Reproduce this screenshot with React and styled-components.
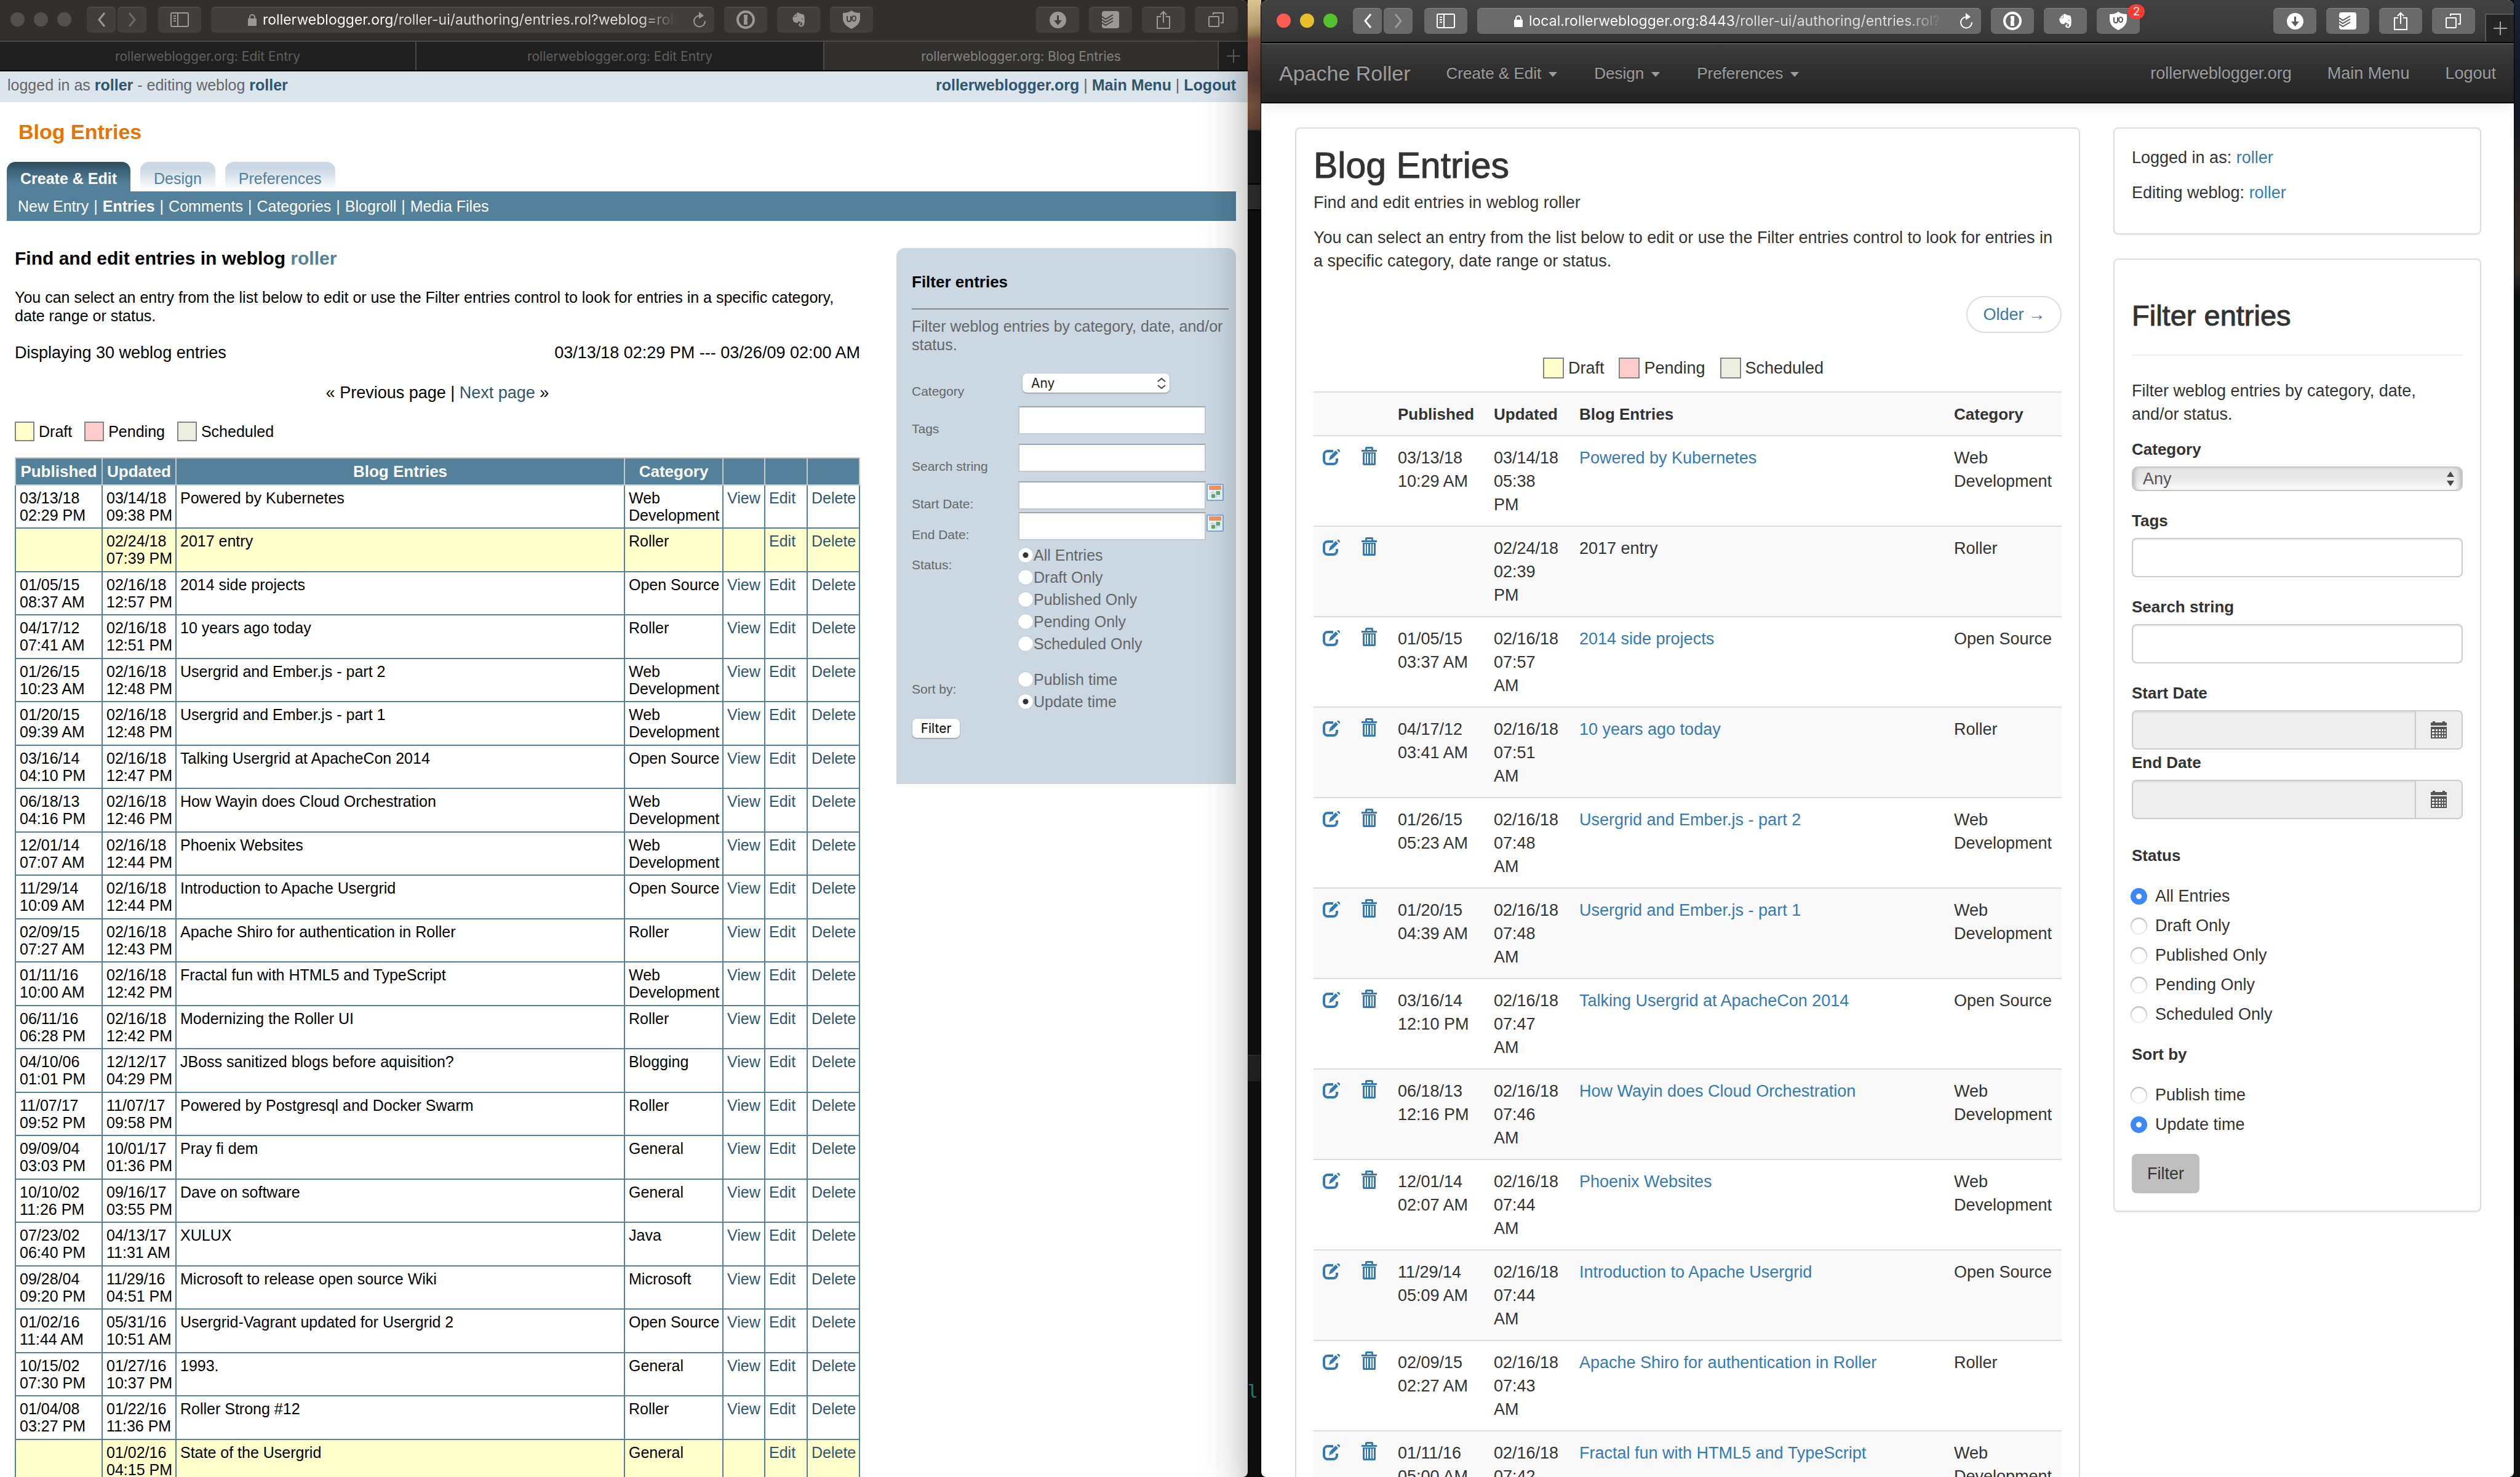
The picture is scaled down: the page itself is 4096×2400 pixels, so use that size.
import React from "react";
import styled, { createGlobalStyle, css } from "styled-components";
import { FaEvernote } from "react-icons/fa";

const GlobalStyle = createGlobalStyle`
  *, *::before, *::after { box-sizing: border-box; }
  html, body, #root { height: 100%; }
  body { margin: 0; background: #111; overflow: hidden; }
  body, button, input, select { font-family: "Liberation Sans", Arial, sans-serif; }
  button, input, select { margin: 0; padding: 0; border: 0; background: none; color: inherit; }
  h1, h2, p, ul, fieldset, table { margin: 0; padding: 0; border: 0; }
  ul { list-style: none; }
  a { text-decoration: none; }
`;

/* ---------- data ---------- */

const legacyEntries = [
  ["03/13/18 02:29 PM", "03/14/18 09:38 PM", "Powered by Kubernetes", "Web Development"],
  ["", "02/24/18 07:39 PM", "2017 entry", "Roller"],
  ["01/05/15 08:37 AM", "02/16/18 12:57 PM", "2014 side projects", "Open Source"],
  ["04/17/12 07:41 AM", "02/16/18 12:51 PM", "10 years ago today", "Roller"],
  ["01/26/15 10:23 AM", "02/16/18 12:48 PM", "Usergrid and Ember.js - part 2", "Web Development"],
  ["01/20/15 09:39 AM", "02/16/18 12:48 PM", "Usergrid and Ember.js - part 1", "Web Development"],
  ["03/16/14 04:10 PM", "02/16/18 12:47 PM", "Talking Usergrid at ApacheCon 2014", "Open Source"],
  ["06/18/13 04:16 PM", "02/16/18 12:46 PM", "How Wayin does Cloud Orchestration", "Web Development"],
  ["12/01/14 07:07 AM", "02/16/18 12:44 PM", "Phoenix Websites", "Web Development"],
  ["11/29/14 10:09 AM", "02/16/18 12:44 PM", "Introduction to Apache Usergrid", "Open Source"],
  ["02/09/15 07:27 AM", "02/16/18 12:43 PM", "Apache Shiro for authentication in Roller", "Roller"],
  ["01/11/16 10:00 AM", "02/16/18 12:42 PM", "Fractal fun with HTML5 and TypeScript", "Web Development"],
  ["06/11/16 06:28 PM", "02/16/18 12:42 PM", "Modernizing the Roller UI", "Roller"],
  ["04/10/06 01:01 PM", "12/12/17 04:29 PM", "JBoss sanitized blogs before aquisition?", "Blogging"],
  ["11/07/17 09:52 PM", "11/07/17 09:58 PM", "Powered by Postgresql and Docker Swarm", "Roller"],
  ["09/09/04 03:03 PM", "10/01/17 01:36 PM", "Pray fi dem", "General"],
  ["10/10/02 11:26 PM", "09/16/17 03:55 PM", "Dave on software", "General"],
  ["07/23/02 06:40 PM", "04/13/17 11:31 AM", "XULUX", "Java"],
  ["09/28/04 09:20 PM", "11/29/16 04:51 PM", "Microsoft to release open source Wiki", "Microsoft"],
  ["01/02/16 11:44 AM", "05/31/16 10:51 AM", "Usergrid-Vagrant updated for Usergrid 2", "Open Source"],
  ["10/15/02 07:30 PM", "01/27/16 10:37 PM", "1993.", "General"],
  ["01/04/08 03:27 PM", "01/22/16 11:36 PM", "Roller Strong #12", "Roller"],
  ["", "01/02/16 04:15 PM", "State of the Usergrid", "General"],
];

const entries = [
  ["03/13/18 10:29 AM", "03/14/18 05:38 PM", "Powered by Kubernetes", "Web Development"],
  ["", "02/24/18 02:39 PM", "2017 entry", "Roller"],
  ["01/05/15 03:37 AM", "02/16/18 07:57 AM", "2014 side projects", "Open Source"],
  ["04/17/12 03:41 AM", "02/16/18 07:51 AM", "10 years ago today", "Roller"],
  ["01/26/15 05:23 AM", "02/16/18 07:48 AM", "Usergrid and Ember.js - part 2", "Web Development"],
  ["01/20/15 04:39 AM", "02/16/18 07:48 AM", "Usergrid and Ember.js - part 1", "Web Development"],
  ["03/16/14 12:10 PM", "02/16/18 07:47 AM", "Talking Usergrid at ApacheCon 2014", "Open Source"],
  ["06/18/13 12:16 PM", "02/16/18 07:46 AM", "How Wayin does Cloud Orchestration", "Web Development"],
  ["12/01/14 02:07 AM", "02/16/18 07:44 AM", "Phoenix Websites", "Web Development"],
  ["11/29/14 05:09 AM", "02/16/18 07:44 AM", "Introduction to Apache Usergrid", "Open Source"],
  ["02/09/15 02:27 AM", "02/16/18 07:43 AM", "Apache Shiro for authentication in Roller", "Roller"],
  ["01/11/16 05:00 AM", "02/16/18 07:42 AM", "Fractal fun with HTML5 and TypeScript", "Web Development"],
];

const statuses = ["All Entries", "Draft Only", "Published Only", "Pending Only", "Scheduled Only"];
const sorts = ["Publish time", "Update time"];
const legend = [
  ["Draft", "#ffffcc"],
  ["Pending", "#ffcccc"],
  ["Scheduled", "#eceedf"],
];

/* ---------- icons ---------- */

const ChevronIcon = ({ flip }) => (
  <svg width="14" height="26" viewBox="0 0 14 26" fill="none" stroke="currentColor" strokeWidth="3">
    <path d={flip ? "M2 2l9 11-9 11" : "M12 2L3 13l9 11"} />
  </svg>
);

const SidebarIcon = () => (
  <svg width="30" height="24" viewBox="0 0 30 24" fill="none" stroke="currentColor" strokeWidth="2">
    <rect x="1" y="1" width="28" height="22" rx="2" />
    <path d="M12 1v22M5 6h4M5 10h4M5 14h4" />
  </svg>
);

const LockIcon = () => (
  <svg width="16" height="20" viewBox="0 0 16 20">
    <path d="M4 9V6a4 4 0 0 1 8 0v3" fill="none" stroke="currentColor" strokeWidth="2" />
    <rect x="1" y="8" width="14" height="12" rx="1" fill="currentColor" />
  </svg>
);

const ReloadIcon = () => (
  <svg width="24" height="28" viewBox="0 0 24 28" fill="none">
    <path d="M11 7.500A9 9 0 1 0 21 16" stroke="currentColor" strokeWidth="2" />
    <path d="M11 1l8 6.500-8 5z" fill="currentColor" />
  </svg>
);

const KeyholeIcon = () => (
  <svg width="32" height="32" viewBox="0 0 32 32">
    <circle cx="16" cy="16" r="13" fill="none" stroke="currentColor" strokeWidth="4" />
    <path d="M13 8h6v8l-1 2 1 1v5h-6v-8l1-2-1-1z" fill="currentColor" />
  </svg>
);

const ShieldIcon = ({ ink }) => (
  <svg width="28" height="30" viewBox="0 0 28 30">
    <path d="M14 0c4 3 8 4 14 4v8c0 9-6 14-14 18C6 26 0 21 0 12V4c6 0 10-1 14-4z" fill="currentColor" />
    <path d="M7 9v6q0 3 3 3t3-3V9" fill="none" stroke={ink} strokeWidth="2" />
    <ellipse cx="18" cy="13" rx="3" ry="4" fill="none" stroke={ink} strokeWidth="2" />
  </svg>
);

const DownloadIcon = ({ ink }) => (
  <svg width="27" height="27" viewBox="0 0 27 27">
    <circle cx="13.500" cy="13.500" r="13.500" fill="currentColor" />
    <path d="M12 6h3v8h5l-6.500 8L7 14h5z" fill={ink} />
  </svg>
);

const TasksIcon = ({ ink }) => (
  <svg width="28" height="28" viewBox="0 0 28 28">
    <rect width="28" height="28" rx="4" fill="currentColor" />
    <path d="M0 9l6 4L18 6M0 14l6 4 12-7M0 19l6 4 12-7" fill="none" stroke={ink} strokeWidth="2" />
  </svg>
);

const ShareIcon = () => (
  <svg width="24" height="30" viewBox="0 0 24 30" fill="none" stroke="currentColor" strokeWidth="2">
    <path d="M8 10H2v19h20V10h-6M12 20V2M7 7l5-5 5 5" />
  </svg>
);

const WindowsIcon = () => (
  <svg width="26" height="24" viewBox="0 0 26 24" fill="none" stroke="currentColor" strokeWidth="2">
    <rect x="1" y="7" width="16" height="16" rx="1" />
    <path d="M8 4V1h16v16h-4" />
  </svg>
);

const PlusIcon = () => (
  <svg width="22" height="22" viewBox="0 0 22 22" stroke="currentColor" strokeWidth="2">
    <path d="M11 0v22M0 11h22" />
  </svg>
);

const EditIcon = () => (
  <svg width="29" height="26" viewBox="0 0 29 26">
    <path d="M17 3H8a6 6 0 0 0-6 6v9a6 6 0 0 0 6 6h9a6 6 0 0 0 6-6v-3" fill="none" stroke="currentColor" strokeWidth="4" />
    <path d="M10 18l2-7L21 2l4 4-9 9zM23 1l1-1h2l2 2v2l-1 1z" fill="currentColor" />
  </svg>
);

const TrashIcon = () => (
  <svg width="25" height="30" viewBox="0 0 25 30">
    <path d="M6 5V2q0-2 2-2h9q2 0 2 2v3h6v3H0V5zm3 0h7V3H9z" fill="currentColor" fillRule="evenodd" />
    <path d="M2 9h21v19q0 2-2 2H4q-2 0-2-2zm3 2v16h2V11zm4 0v16h2V11zm5 0v16h2V11zm4 0v16h2V11z" fill="currentColor" fillRule="evenodd" />
  </svg>
);

const GridCalendarIcon = () => (
  <svg width="26" height="28" viewBox="0 0 26 28">
    <path d="M0 2h3V0h4v2h12V0h4v2h3v5H0z" fill="currentColor" />
    <path d="M0 9h26v19H0zM2 13v3h4v-3zm6 0v3h3v-3zm5 0v3h3v-3zm5 0v3h2v-3zm4 0v3h2v-3zM2 18v3h4v-3zm6 0v3h3v-3zm5 0v3h3v-3zm5 0v3h2v-3zm4 0v3h2v-3zM2 23v3h4v-3zm6 0v3h3v-3zm5 0v3h3v-3zm5 0v3h2v-3zm4 0v3h2v-3z" fill="currentColor" fillRule="evenodd" />
  </svg>
);

const ColorCalendarIcon = () => (
  <svg width="28" height="28" viewBox="0 0 28 28">
    <rect x="1" y="1" width="26" height="26" rx="1" fill="#eef5fc" stroke="#7fa8dc" strokeWidth="2" />
    <rect x="4" y="3" width="20" height="7" rx="1" fill="#f5935a" />
    <path d="M5 15h18M5 20h18M10 11v13M16 11v13" stroke="#b5cdea" />
    <rect x="16" y="12" width="6" height="6" fill="#5fae5f" />
    <rect x="8" y="17" width="6" height="6" fill="#5fae5f" />
  </svg>
);

const UpDownChevrons = () => (
  <svg width="14" height="20" viewBox="0 0 14 20" fill="none" stroke="#444" strokeWidth="2">
    <path d="M1 7l6-5 6 5M1 13l6 5 6-5" />
  </svg>
);

const UpDownTriangles = () => (
  <svg width="12" height="24" viewBox="0 0 12 24" fill="#4a4a4a">
    <path d="M0 9l6-9 6 9zM0 15l6 9 6-9z" />
  </svg>
);

/* ---------- desktop ---------- */

const Desktop = styled.div`
  display: grid;
  grid-template-columns: 2028fr 22px 2036fr 10px;
  height: 100%;
  overflow: hidden;
`;

const Backdrop = styled.div`
  display: flex;
  flex-direction: column;
  background: #111;
  color: #23a3a0;
  font: 28px "DejaVu Sans Mono", monospace;
`;

const Photo = styled.div`
  height: 210px;
  background: linear-gradient(#e8cd99, #cfb17c 40px, #a88a5e 56px, #94604c 64px, #6f4a40 130px, #95654b 170px, #7a503b);
`;

const Band = styled.div`
  height: ${(p) => p.$h}px;
  background: ${(p) => p.$bg};
  border-top: 2px solid ${(p) => p.$edge || "#000"};
`;

const Spacer = styled.div`
  flex: ${(p) => p.$grow || 1};
`;

const Edge = styled.div`
  background: linear-gradient(#1a2434, #1c2330 200px, #35302c 280px, #453c37 440px, #121a1d 480px, #10191b 1200px, #1c1c1a 1600px, #050607 1750px, #14181a);
`;

const Window = styled.section`
  display: flex;
  flex-direction: column;
  min-width: 0;
  min-height: 0;
  overflow: hidden;
  background: #fff;
  border-radius: ${(p) => (p.$front ? "10px 10px 8px 8px" : "0 10px 8px 0")};
  ${(p) =>
    p.$front &&
    css`
      z-index: 1;
      box-shadow: 0 40px 90px rgba(0, 0, 0, 0.6), 0 0 0 1px #000;
    `}
`;

/* ---------- browser chrome ---------- */

const Toolbar = styled.header`
  flex: none;
  display: flex;
  align-items: flex-start;
  gap: 16px;
  height: ${(p) => (p.$front ? 70 : 68)}px;
  padding: ${(p) => (p.$front ? "13px 0 0 25px" : "11px 16px 0 17px")};
  color: ${(p) => (p.$front ? "#fff" : "#9a9997")};
  background: ${(p) => (p.$front ? "linear-gradient(#434343, #363636)" : "#31302d")};
  border-bottom: ${(p) => (p.$front ? "2px solid #000" : "2px solid #4a4947")};
`;

const Lights = styled.div`
  display: flex;
  gap: 15px;
  padding: 9px 9px 0 0;
`;

const Light = styled.button`
  width: 23px;
  height: 23px;
  border-radius: 50%;
  background: ${(p) => p.$c};
`;

const ToolPair = styled.div`
  display: flex;
  gap: 3px;
  margin-right: 3px;
`;

const Tool = styled.button`
  position: relative;
  display: grid;
  place-items: center;
  width: ${(p) => (p.$narrow ? 47 : 70)}px;
  height: 42px;
  border-radius: 7px;
  color: ${(p) => (p.$dim ? (p.$front ? "#9a9a9a" : "#6c6b69") : "inherit")};
  background: ${(p) => (p.$front ? "#6a6a6a" : "#403f3c")};
  box-shadow: inset 0 1px 0 ${(p) => (p.$front ? "#858585" : "#52514e")};
`;

const Badge = styled.span`
  position: absolute;
  top: -6px;
  right: -8px;
  width: 27px;
  height: 24px;
  border-radius: 12px;
  background: #ff3b30;
  color: #fff;
  font: 19px/24px Inter, sans-serif;
  text-align: center;
`;

const AddressBar = styled.div`
  flex: 1;
  min-width: 0;
  display: flex;
  align-items: center;
  gap: 9px;
  height: 42px;
  padding: 0 12px 0 59px;
  border-radius: 7px;
  background: ${(p) => (p.$front ? "#6b6b6b" : "#403f3c")};
  box-shadow: inset 0 1px 0 ${(p) => (p.$front ? "#858585" : "#52514e")};
`;

const Address = styled.input`
  flex: 1;
  min-width: 0;
  height: 42px;
  margin-right: 16px;
  font: 23px Inter, sans-serif;
  outline: 0;
  -webkit-text-fill-color: transparent;
  background: linear-gradient(90deg, #fff ${(p) => p.$host}px, #dedede ${(p) => p.$host}px, #dedede calc(100% - 60px), transparent);
  background-clip: text;
  -webkit-background-clip: text;
`;

const ReloadButton = styled.button`
  display: grid;
  place-items: center;
  height: 42px;
`;

const NewTab = styled.button`
  display: grid;
  place-items: center;
  width: 47px;
  height: 46px;
  margin-top: 9px;
  color: #a5a5a5;
  background: #262626;
  border-left: 2px solid #5a5a5a;
  border-top: 2px solid #5a5a5a;
`;

const TabStrip = styled.nav`
  flex: none;
  display: grid;
  grid-template-columns: 677fr 663fr 641fr 47px;
  height: 48px;
  border-bottom: 2px solid #000;
  background: #202020;
`;

const PageTab = styled.button`
  display: grid;
  place-items: center;
  font: 21px Inter, sans-serif;
  color: ${(p) => (p.$on ? "#84837f" : "#5f5f5f")};
  background: ${(p) => (p.$on ? "#31302d" : "#202020")};
  border-right: ${(p) => (p.$last ? 0 : "2px solid #4a4947")};
`;

function ChromeBar({ front, url, host, badge }) {
  const ink = front ? "#5a5a5a" : "#403f3c";
  const lights = front ? ["#ff5b52", "#e6bf2c", "#54c22c"] : ["#52514f", "#52514f", "#52514f"];
  return (
    <Toolbar $front={front}>
      <Lights>
        {["Close", "Minimize", "Zoom"].map((n, i) => (
          <Light key={n} aria-label={n} $c={lights[i]} />
        ))}
      </Lights>
      <ToolPair>
        <Tool $narrow $front={front} aria-label="Back"><ChevronIcon /></Tool>
        <Tool $narrow $dim $front={front} aria-label="Forward"><ChevronIcon flip /></Tool>
      </ToolPair>
      <Tool $front={front} aria-label="Sidebar"><SidebarIcon /></Tool>
      <AddressBar $front={front}>
        <LockIcon />
        <Address aria-label="Address" defaultValue={url} $host={host} />
        <ReloadButton aria-label="Reload"><ReloadIcon /></ReloadButton>
      </AddressBar>
      <Tool $front={front} aria-label="Passwords"><KeyholeIcon /></Tool>
      <Tool $front={front} aria-label="Clipper"><FaEvernote size={26} /></Tool>
      <Tool $front={front} aria-label="Blocker">
        <ShieldIcon ink={ink} />
        {badge && <Badge>{badge}</Badge>}
      </Tool>
      <Spacer $grow={front ? "0 0 185px" : "0 0 233px"} />
      <Tool $front={front} aria-label="Downloads"><DownloadIcon ink={ink} /></Tool>
      <Tool $front={front} aria-label="Tasks"><TasksIcon ink={ink} /></Tool>
      <Tool $front={front} aria-label="Share"><ShareIcon /></Tool>
      <Tool $front={front} aria-label="All tabs"><WindowsIcon /></Tool>
      {front && <NewTab aria-label="New tab"><PlusIcon /></NewTab>}
    </Toolbar>
  );
}

/* ---------- shared parts ---------- */

const Legend = styled.ul`
  display: flex;
  justify-content: ${(p) => (p.$center ? "center" : "flex-start")};
  gap: ${(p) => (p.$center ? 24 : 20)}px;
  margin-top: ${(p) => (p.$center ? 38 : 32)}px;
  padding-right: ${(p) => (p.$center ? 14 : 0)}px;
  line-height: ${(p) => (p.$center ? 38 : 32)}px;
`;

const LegendItem = styled.li`
  display: flex;
  align-items: center;
  gap: 7px;
`;

const Swatch = styled.span`
  width: ${(p) => p.$size}px;
  height: ${(p) => p.$size}px;
  background: ${(p) => p.$c};
  border: 2px solid #848484;
`;

const SelectBox = styled.div`
  display: grid;
  align-items: center;
  justify-items: end;
  & > * { grid-area: 1 / 1; }
  & > svg { pointer-events: none; margin-right: ${(p) => p.$inset}px; }
`;

/* ---------- legacy page ---------- */

const LegacyStatus = styled.div`
  flex: none;
  display: flex;
  justify-content: space-between;
  padding: 7px 19px 13px 12px;
  background: #dce4ec;
  color: #666;
  font-size: 25px;
  line-height: 30px;
`;

const StrongLink = styled.a`
  font-weight: 700;
  color: ${(p) => p.$c || "#2e566e"};
`;

const LegacyTitle = styled.h1`
  padding: 28px 30px 29px;
  font-size: 34px;
  line-height: 40px;
  color: #e77300;
`;

const LegacyTabs = styled.ul`
  display: flex;
  gap: 16px;
  margin-left: 11px;
`;

const LegacyTab = styled.a`
  display: block;
  height: 48px;
  padding: 0 22px;
  border-radius: 14px 14px 0 0;
  font-size: 25px;
  line-height: 54px;
  font-weight: ${(p) => (p.$on ? 700 : 400)};
  color: ${(p) => (p.$on ? "#fff" : "#53819b")};
  background: ${(p) => (p.$on ? "linear-gradient(#2b4d5f, #53819b 36px)" : "linear-gradient(#c9d8e3, #ccd9e4 12px, #fff 46px)")};
`;

const LegacyMenu = styled.nav`
  margin: 0 19px 0 11px;
  padding: 0 18px;
  background: #53819b;
  color: #fff;
  font-size: 25px;
  line-height: 48px;
`;

const MenuLink = styled.a`
  color: #fff;
  font-weight: ${(p) => (p.$on ? 700 : 400)};
`;

const MenuDivider = styled.span`
  margin: 0 8px;
`;

const LegacyBody = styled.div`
  display: grid;
  grid-template-columns: minmax(0, 1fr) 552px;
  align-items: start;
  gap: 59px;
  padding: 43px 19px 0 24px;
  color: #000;
`;

const LegacyHeading = styled.h2`
  font-size: 30px;
  line-height: 36px;
`;

const LegacyIntro = styled.p`
  margin: 30px 0;
  font-size: 25px;
  line-height: 30px;
`;

const LegacyRange = styled.div`
  display: flex;
  justify-content: space-between;
  font-size: 27px;
  line-height: 30px;
`;

const LegacyPager = styled.p`
  margin-top: 35px;
  font-size: 27px;
  line-height: 30px;
  text-align: center;
`;

const SmallText = styled.div`
  font-size: 25px;
`;

const PlainLink = styled.a`
  color: ${(p) => p.$c || "#2e566e"};
`;

const LegacyTable = styled.table`
  width: 100%;
  margin-top: 26px;
  table-layout: fixed;
  border-collapse: collapse;
  font-size: 25px;
  line-height: 28px;
`;

const LegacyTh = styled.th`
  padding: 6px 0;
  border: 2px solid #c4c8ca;
  background: #53819b;
  color: #fff;
  font-size: 26px;
  line-height: 30px;
`;

const LegacyTd = styled.td`
  padding: 6px 4px 6px 6px;
  vertical-align: top;
  border: 2px solid #53819b;
`;

const LegacyRow = styled.tr`
  height: 70px;
  background: ${(p) => (p.$draft ? "#ffffcc" : "#fff")};
  &:nth-child(even) td { padding-bottom: 7px; }
`;

const LegacyFilter = styled.form`
  margin-top: 1px;
  padding: 40px 12px 75px 25px;
  border-radius: 14px 14px 0 0;
  background: #cbd8e1;
  color: #666;
  font-size: 25px;
  line-height: 30px;
`;

const LegacyFilterTitle = styled.h2`
  padding-bottom: 28px;
  border-bottom: 2px solid #888;
  font-size: 26px;
  line-height: 30px;
  color: #000;
`;

const LegacyFilterIntro = styled.p`
  margin: 12px 0 32px;
`;

const LegacyFields = styled.div`
  display: grid;
  grid-template-columns: 173px 1fr;
  align-items: end;
  row-gap: ${(p) => p.$gap}px;
  margin-bottom: ${(p) => p.$after}px;
`;

const LegacyLabel = styled.label`
  font-size: 21px;
  line-height: 24px;
`;

const LegacySelectBox = styled(SelectBox)`
  width: 239px;
  margin: 0 0 10px 7px;
`;

const LegacySelect = styled.select`
  appearance: none;
  width: 100%;
  height: 31px;
  padding-left: 14px;
  border-radius: 7px;
  background: #fff;
  box-shadow: 0 1px 2px rgba(0, 0, 0, 0.4);
  font: 21px Inter, sans-serif;
  color: #222;
`;

const LegacyField = styled.div`
  display: flex;
  gap: 1px;
`;

const LegacyInput = styled.input`
  width: 305px;
  height: 46px;
  margin-bottom: 3px;
  background: #fff;
  border: 2px solid #c4c8cb;
  border-top-color: #9aa7b0;
`;

const IconButton = styled.button`
  align-self: flex-start;
  display: block;
  padding-top: 4px;
  height: 32px;
`;

const LegacyGroup = styled.fieldset`
  display: grid;
  grid-template-columns: 172px 1fr;
  margin-top: ${(p) => p.$top}px;
  line-height: 36px;
`;

const LegacyGroupLabel = styled.span`
  padding-top: 22px;
  font-size: 21px;
  line-height: 24px;
`;

const LegacyChoice = styled.label`
  display: flex;
  align-items: center;
`;

const LegacyRadio = styled.input`
  appearance: none;
  width: 26px;
  height: 26px;
  border-radius: 50%;
  background: #fff;
  box-shadow: inset 0 0 1px 1px #b5bcc2;
  &:checked { background: radial-gradient(circle, #333 4px, #fff 5px); }
`;

const LegacySubmit = styled.button`
  display: block;
  width: 77px;
  height: 31px;
  margin: 10px 0 0 1px;
  border-radius: 7px;
  background: #fff;
  box-shadow: 0 1px 2px rgba(0, 0, 0, 0.4);
  font: 21px Inter, sans-serif;
  color: #000;
`;

function LegacyPage() {
  return (
    <>
      <LegacyStatus>
        <span>
          logged in as <StrongLink href="#roller">roller</StrongLink> - editing weblog{" "}
          <StrongLink href="#weblog">roller</StrongLink>
        </span>
        <span>
          <StrongLink href="#site">rollerweblogger.org</StrongLink> | <StrongLink href="#menu">Main Menu</StrongLink> |{" "}
          <StrongLink href="#logout">Logout</StrongLink>
        </span>
      </LegacyStatus>
      <LegacyTitle>Blog Entries</LegacyTitle>
      <LegacyTabs>
        {["Create & Edit", "Design", "Preferences"].map((t, i) => (
          <li key={t}>
            <LegacyTab href="#tab" $on={i === 0}>{t}</LegacyTab>
          </li>
        ))}
      </LegacyTabs>
      <LegacyMenu>
        {["New Entry", "Entries", "Comments", "Categories", "Blogroll", "Media Files"].map((t, i) => (
          <React.Fragment key={t}>
            {i > 0 && <MenuDivider>|</MenuDivider>}
            <MenuLink href="#menu" $on={i === 1}>{t}</MenuLink>
          </React.Fragment>
        ))}
      </LegacyMenu>
      <LegacyBody>
        <main>
          <LegacyHeading>
            Find and edit entries in weblog <StrongLink href="#weblog" $c="#53819b">roller</StrongLink>
          </LegacyHeading>
          <LegacyIntro>
            You can select an entry from the list below to edit or use the Filter entries control to look for entries in
            a specific category, date range or status.
          </LegacyIntro>
          <LegacyRange>
            <span>Displaying 30 weblog entries</span>
            <span>03/13/18 02:29 PM --- 03/26/09 02:00 AM</span>
          </LegacyRange>
          <LegacyPager>
            « Previous page | <PlainLink href="#next">Next page</PlainLink> »
          </LegacyPager>
          <SmallText>
            <Legend>
              {legend.map(([name, c]) => (
                <LegendItem key={name}><Swatch $size={32} $c={c} />{name}</LegendItem>
              ))}
            </Legend>
          </SmallText>
          <LegacyTable>
            <colgroup>
              <col width="141" /><col width="120" /><col /><col width="160" />
              <col width="68" /><col width="69" /><col width="85" />
            </colgroup>
            <thead>
              <tr>
                <LegacyTh>Published</LegacyTh>
                <LegacyTh>Updated</LegacyTh>
                <LegacyTh>Blog Entries</LegacyTh>
                <LegacyTh>Category</LegacyTh>
                <LegacyTh /><LegacyTh /><LegacyTh />
              </tr>
            </thead>
            <tbody>
              {legacyEntries.map(([pub, upd, title, cat]) => (
                <LegacyRow key={title} $draft={!pub}>
                  <LegacyTd>{pub}</LegacyTd>
                  <LegacyTd>{upd}</LegacyTd>
                  <LegacyTd>{title}</LegacyTd>
                  <LegacyTd>{cat}</LegacyTd>
                  <LegacyTd>{pub && <PlainLink href="#view">View</PlainLink>}</LegacyTd>
                  <LegacyTd><PlainLink href="#edit">Edit</PlainLink></LegacyTd>
                  <LegacyTd><PlainLink href="#delete">Delete</PlainLink></LegacyTd>
                </LegacyRow>
              ))}
            </tbody>
          </LegacyTable>
        </main>
        <LegacyFilter>
          <LegacyFilterTitle>Filter entries</LegacyFilterTitle>
          <LegacyFilterIntro>Filter weblog entries by category, date, and/or status.</LegacyFilterIntro>
          <LegacyFields $gap={12} $after={12}>
            <LegacyLabel htmlFor="l-cat">Category</LegacyLabel>
            <LegacySelectBox $inset={6}>
              <LegacySelect id="l-cat"><option>Any</option></LegacySelect>
              <UpDownChevrons />
            </LegacySelectBox>
            <LegacyLabel htmlFor="l-tags">Tags</LegacyLabel>
            <LegacyField><LegacyInput id="l-tags" /></LegacyField>
            <LegacyLabel htmlFor="l-search">Search string</LegacyLabel>
            <LegacyField><LegacyInput id="l-search" /></LegacyField>
          </LegacyFields>
          <LegacyFields $gap={1} $after={3}>
            <LegacyLabel htmlFor="l-start">Start Date:</LegacyLabel>
            <LegacyField>
              <LegacyInput id="l-start" />
              <IconButton type="button" aria-label="Pick start date"><ColorCalendarIcon /></IconButton>
            </LegacyField>
            <LegacyLabel htmlFor="l-end">End Date:</LegacyLabel>
            <LegacyField>
              <LegacyInput id="l-end" />
              <IconButton type="button" aria-label="Pick end date"><ColorCalendarIcon /></IconButton>
            </LegacyField>
          </LegacyFields>
          <LegacyGroup $top={0}>
            <LegacyGroupLabel>Status:</LegacyGroupLabel>
            <div>
              {statuses.map((s, i) => (
                <LegacyChoice key={s}><LegacyRadio type="radio" name="l-status" defaultChecked={i === 0} />{s}</LegacyChoice>
              ))}
            </div>
          </LegacyGroup>
          <LegacyGroup $top={22}>
            <LegacyGroupLabel>Sort by:</LegacyGroupLabel>
            <div>
              {sorts.map((s, i) => (
                <LegacyChoice key={s}><LegacyRadio type="radio" name="l-sort" defaultChecked={i === 1} />{s}</LegacyChoice>
              ))}
            </div>
          </LegacyGroup>
          <LegacySubmit type="button">Filter</LegacySubmit>
        </LegacyFilter>
      </LegacyBody>
    </>
  );
}

/* ---------- new page ---------- */

const Navbar = styled.nav`
  flex: none;
  display: flex;
  align-items: center;
  gap: 58px;
  height: 98px;
  padding: 0 29px;
  color: #9d9d9d;
  background: linear-gradient(#3c3c3c, #222);
  border-top: 2px solid #575757;
  border-bottom: 2px solid #080808;
  box-shadow: 0 2px 18px rgba(0, 0, 0, 0.12);
  text-shadow: 0 -2px 0 rgba(0, 0, 0, 0.25);
`;

const Brand = styled.a`
  font-size: 34px;
  line-height: 38px;
`;

const NavList = styled.ul`
  display: flex;
  gap: ${(p) => (p.$end ? 58 : 60)}px;
  margin-left: ${(p) => (p.$end ? "auto" : 0)};
  font-size: ${(p) => (p.$end ? 27 : 26)}px;
  line-height: 38px;
`;

const NavItem = styled.a`
  display: flex;
  align-items: center;
  gap: 12px;
`;

const Caret = styled.i`
  margin-top: 4px;
  border: 7px solid transparent;
  border-top: 8px solid currentColor;
  border-bottom: 0;
`;

const Content = styled.div`
  display: grid;
  grid-template-columns: 1276fr 598fr;
  align-items: start;
  gap: 54px;
  padding: 39px 53px 0 55px;
  color: #333;
  font-size: 27px;
  line-height: 38px;
`;

const Panel = styled.section`
  margin-bottom: 39px;
  padding: 28px;
  min-width: 0;
  border: 2px solid #ddd;
  border-radius: 8px;
  box-shadow: 0 2px 2px rgba(0, 0, 0, 0.05);
`;

const Side = styled.aside`
  min-width: 0;
`;

const PageTitle = styled.h1`
  margin-bottom: 9px;
  font-size: 59px;
  line-height: 64px;
  font-weight: 400;
  -webkit-text-stroke: 1px currentColor;
`;

const Para = styled.p`
  margin-bottom: 19px;
`;

const Pager = styled.div`
  display: flex;
  justify-content: flex-end;
  margin-top: 38px;
`;

const PagerLink = styled.a`
  padding: 9px 25px;
  border: 2px solid #ddd;
  border-radius: 30px;
  color: #337ab7;
`;

const Table = styled.table`
  width: 100%;
  margin-top: 19px;
  table-layout: fixed;
  border-collapse: collapse;
`;

const Cell = styled.td`
  padding: 16px 15px 15px;
  vertical-align: top;
  text-align: left;
  border-top: 2px solid #ddd;
`;

const HeadCell = styled(Cell)`
  font-size: 26px;
  font-weight: 700;
`;

const Row = styled.tr`
  background: ${(p) => (p.$shaded ? "#f9f9f9" : "#fff")};
`;

const RowAction = styled.button`
  display: flex;
  align-items: flex-end;
  height: 31px;
  color: #337ab7;
`;

const SideTitle = styled.h2`
  margin-top: 38px;
  padding-bottom: 38px;
  margin-bottom: 38px;
  border-bottom: 2px solid #eee;
  font-size: 47px;
  line-height: 50px;
  font-weight: 400;
  -webkit-text-stroke: 1px currentColor;
`;

const Field = styled.div`
  margin-bottom: ${(p) => (p.$tight ? 2 : 29)}px;
`;

const Label = styled.label`
  display: block;
  margin-bottom: 9px;
  font-size: 26px;
  font-weight: 700;
`;

const GroupLabel = styled(Label)`
  margin-bottom: 28px;
`;

const Select = styled.select`
  appearance: none;
  width: 100%;
  height: 40px;
  padding-left: 16px;
  border: 2px solid #c6c6c6;
  border-radius: 10px;
  background: linear-gradient(#e4e4e4, #ebebeb 60%, #fdfdfd);
  box-shadow: inset 8px 0 8px -6px #aaa, inset -8px 0 8px -6px #aaa;
  font-size: 27px;
  color: #555;
`;

const Input = styled.input`
  display: block;
  flex: 1;
  min-width: 0;
  width: 100%;
  height: 64px;
  border: 2px solid #ccc;
  border-radius: ${(p) => (p.readOnly ? "8px 0 0 8px" : "8px")};
  background: ${(p) => (p.readOnly ? "#eee" : "#fff")};
  box-shadow: inset 0 2px 2px rgba(0, 0, 0, 0.075);
`;

const InputGroup = styled.div`
  display: flex;
`;

const Addon = styled.button`
  display: grid;
  place-items: center;
  width: 76px;
  height: 64px;
  border: 2px solid #ccc;
  border-left: 0;
  border-radius: 0 8px 8px 0;
  background: #eee;
  color: #555;
`;

const Group = styled.fieldset`
  margin-top: ${(p) => p.$top}px;
`;

const Choice = styled.label`
  display: flex;
  align-items: center;
  gap: 13px;
  margin-bottom: 10px;
`;

const Radio = styled.input`
  appearance: none;
  width: 27px;
  height: 27px;
  margin-left: -2px;
  border-radius: 50%;
  background: #fff;
  box-shadow: inset 0 1px 2px 1px #b4b4b4;
  &:checked {
    background: radial-gradient(circle, #fff 4px, #3b88fd 5px);
    box-shadow: none;
  }
`;

const Submit = styled.button`
  display: block;
  height: 64px;
  margin-top: 19px;
  padding: 0 25px;
  border-radius: 8px;
  background: #bfbfbf;
  font-size: 27px;
  color: #333;
`;

function DateField({ id, label, tight }) {
  return (
    <Field $tight={tight}>
      <Label htmlFor={id}>{label}</Label>
      <InputGroup>
        <Input id={id} readOnly />
        <Addon type="button" aria-label={`Pick ${label}`}><GridCalendarIcon /></Addon>
      </InputGroup>
    </Field>
  );
}

function NewPage() {
  const link = "#337ab7";
  return (
    <>
      <Navbar>
        <Brand href="#home" as={NavBrand}>Apache Roller</Brand>
        <NavList>
          {["Create & Edit", "Design", "Preferences"].map((t) => (
            <li key={t}><NavAnchor href="#nav">{t}<Caret /></NavAnchor></li>
          ))}
        </NavList>
        <NavList $end>
          {["rollerweblogger.org", "Main Menu", "Logout"].map((t) => (
            <li key={t}><NavAnchor href="#nav">{t}</NavAnchor></li>
          ))}
        </NavList>
      </Navbar>
      <Content>
        <Panel as="main">
          <PageTitle>Blog Entries</PageTitle>
          <Para>Find and edit entries in weblog roller</Para>
          <Para>
            You can select an entry from the list below to edit or use the Filter entries control to look for entries in
            a specific category, date range or status.
          </Para>
          <Pager><PagerLink href="#older">Older →</PagerLink></Pager>
          <Legend $center>
            {legend.map(([name, c]) => (
              <LegendItem key={name}><Swatch $size={34} $c={c} />{name}</LegendItem>
            ))}
          </Legend>
          <Table>
            <colgroup>
              <col width="63" /><col width="59" /><col width="156" /><col width="139" /><col /><col width="190" />
            </colgroup>
            <thead>
              <Row $shaded>
                <HeadCell as="th" /><HeadCell as="th" />
                {["Published", "Updated", "Blog Entries", "Category"].map((t) => (
                  <HeadCell as="th" key={t}>{t}</HeadCell>
                ))}
              </Row>
            </thead>
            <tbody>
              {entries.map(([pub, upd, title, cat], i) => (
                <Row key={title} $shaded={i % 2 === 1}>
                  <Cell><RowAction aria-label="Edit"><EditIcon /></RowAction></Cell>
                  <Cell><RowAction aria-label="Delete"><TrashIcon /></RowAction></Cell>
                  <Cell>{pub}</Cell>
                  <Cell>{upd}</Cell>
                  <Cell>{pub ? <PlainLink href="#entry" $c={link}>{title}</PlainLink> : title}</Cell>
                  <Cell>{cat}</Cell>
                </Row>
              ))}
            </tbody>
          </Table>
        </Panel>
        <Side>
          <Panel>
            <Para>Logged in as: <PlainLink href="#roller" $c={link}>roller</PlainLink></Para>
            <Para>Editing weblog: <PlainLink href="#weblog" $c={link}>roller</PlainLink></Para>
          </Panel>
          <Panel>
            <SideTitle>Filter entries</SideTitle>
            <Para>Filter weblog entries by category, date, and/or status.</Para>
            <form>
              <Field>
                <Label htmlFor="category">Category</Label>
                <SelectBox $inset={14}>
                  <Select id="category"><option>Any</option></Select>
                  <UpDownTriangles />
                </SelectBox>
              </Field>
              <Field><Label htmlFor="tags">Tags</Label><Input id="tags" /></Field>
              <Field><Label htmlFor="search">Search string</Label><Input id="search" /></Field>
              <DateField id="start" label="Start Date" tight />
              <DateField id="end" label="End Date" />
              <Group $top={40}>
                <GroupLabel as="div">Status</GroupLabel>
                {statuses.map((s, i) => (
                  <Choice key={s}><Radio type="radio" name="status" defaultChecked={i === 0} />{s}</Choice>
                ))}
              </Group>
              <Group $top={17}>
                <GroupLabel as="div">Sort by</GroupLabel>
                {sorts.map((s, i) => (
                  <Choice key={s}><Radio type="radio" name="sort" defaultChecked={i === 1} />{s}</Choice>
                ))}
              </Group>
              <Submit type="button">Filter</Submit>
            </form>
          </Panel>
        </Side>
      </Content>
    </>
  );
}

const NavBrand = styled.a`
  color: inherit;
`;

const NavAnchor = styled(NavItem)`
  color: inherit;
`;

export default function App() {
  return (
    <>
      <GlobalStyle />
      <Desktop>
        <Window>
          <ChromeBar url="rollerweblogger.org/roller-ui/authoring/entries.rol?weblog=roller" host={211} />
          <TabStrip>
            <PageTab>rollerweblogger.org: Edit Entry</PageTab>
            <PageTab>rollerweblogger.org: Edit Entry</PageTab>
            <PageTab $on>rollerweblogger.org: Blog Entries</PageTab>
            <PageTab $last aria-label="New tab"><PlusIcon /></PageTab>
          </TabStrip>
          <LegacyPage />
        </Window>
        <Backdrop>
          <Photo />
          <Band $h={88} $bg="#1e1e1e" $edge="#444" />
          <Band $h={42} $bg="#373737" />
          <Band $h={1374} $bg="#111" />
          <Band $h={43} $bg="#2a2a2a" $edge="#3a3a3a" />
          <Spacer $grow={490} />
          <span>l</span>
          <Spacer $grow={122} />
        </Backdrop>
        <Window $front>
          <ChromeBar front badge="2" url="local.rollerweblogger.org:8443/roller-ui/authoring/entries.rol?weblog=roller" host={336} />
          <NewPage />
        </Window>
        <Edge />
      </Desktop>
    </>
  );
}
